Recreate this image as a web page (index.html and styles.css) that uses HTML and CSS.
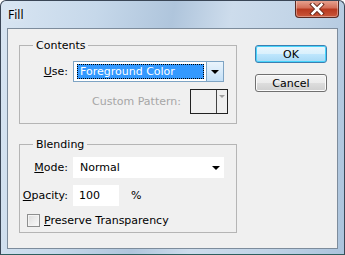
FILE: index.html
```html
<!DOCTYPE html>
<html lang="en">
<head>
	<meta charset="UTF-8">
	<title>Fill</title>
	<link rel="stylesheet" href="styles.css">
</head>
<body>
	<div class="window">
		<div class="titlebar">
			<span class="title">Fill</span>
			<a class="close-btn" href="javascript:;">
				<svg width="16" height="12" viewBox="0 0 16 12"><path d="M3.5 1.5 L12.5 10.5 M12.5 1.5 L3.5 10.5" stroke="#6b2b1e" stroke-width="4.5" stroke-linecap="square"/><path d="M3.5 1.5 L12.5 10.5 M12.5 1.5 L3.5 10.5" stroke="#fff" stroke-width="2.5" stroke-linecap="square"/></svg>
			</a>
		</div>
		<div class="client">
			<div class="groups">
				<fieldset class="group contents">
					<legend>Contents</legend>
					<div class="row">
						<label class="lbl"><u>U</u>se:</label>
						<div class="select focused">
							<span class="select-value">Foreground Color</span>
							<span class="select-btn"><i class="arrow"></i></span>
						</div>
					</div>
					<div class="row pattern-row">
						<span class="lbl-disabled">Custom Pattern:</span>
						<div class="pattern">
							<span class="pattern-swatch"></span>
							<span class="pattern-btn"><i class="arrow small"></i></span>
						</div>
					</div>
				</fieldset>
				<fieldset class="group blending">
					<legend>Blending</legend>
					<div class="row">
						<label class="lbl"><u>M</u>ode:</label>
						<div class="select plain">
							<span class="select-value">Normal</span>
							<span class="select-btn"><i class="arrow"></i></span>
						</div>
					</div>
					<div class="row">
						<label class="lbl"><u>O</u>pacity:</label>
						<span class="input">100</span>
						<span class="unit">%</span>
					</div>
					<div class="row check-row">
						<span class="checkbox"></span>
						<label><u>P</u>reserve Transparency</label>
					</div>
				</fieldset>
			</div>
			<div class="buttons">
				<button class="btn default">OK</button>
				<button class="btn">Cancel</button>
			</div>
		</div>
	</div>
</body>
</html>
```

FILE: styles.css
```css
body {
	margin: 0;
	padding: 0;
	font-family: "DejaVu Sans", Verdana, sans-serif;
	font-size: 11px;
	color: #000;
}
.window {
	width: 343px;
	height: 253px;
	border: 1px solid #3a4656;
	border-bottom-color: #2f5f5f;
	border-radius: 6px 6px 0 0;
	background: linear-gradient(100deg, #d8e5f2 0%, #c6d8ea 25%, #afc5dc 45%, #cddcec 60%, #c0d3e6 80%, #abc3dc 100%);
	display: flex;
	flex-direction: column;
	overflow: hidden;
}
.titlebar {
	height: 27px;
	display: flex;
	align-items: flex-start;
	justify-content: space-between;
}
.title {
	font-family: "Noto Sans", "DejaVu Sans", sans-serif;
	font-size: 12px;
	margin: 5px 0 0 7px;
	text-shadow: 0 0 6px #fff;
}
.close-btn {
	width: 42px;
	height: 17px;
	margin: -1px 5px 0 0;
	border: 1px solid #5a2a22;
	border-top: 0;
	border-radius: 0 0 4px 4px;
	background: linear-gradient(#e9a896 0%, #d4705a 45%, #b8391f 55%, #c9573a 100%);
	display: flex;
	align-items: center;
	justify-content: center;
	box-shadow: inset 0 0 0 1px rgba(255,255,255,.35);
}
.client {
	margin: 0 6px;
	height: 221px;
	border: 1px solid #7d8c9c;
	background: #f0f0f0;
	display: flex;
	padding: 10px 0 0 11px;
	box-sizing: border-box;
}
.groups {
	width: 218px;
	display: flex;
	flex-direction: column;
	gap: 14px;
}
.group {
	margin: 0;
	border: 1px solid #b5b5b5;
	padding: 0 8px 0 0;
}
.group legend {
	margin-left: 13px;
	padding: 0 3px;
	line-height: 13px;
}
.contents {
	padding-top: 9px;
	padding-bottom: 9px;
}
.blending {
	padding-top: 6px;
	padding-bottom: 5px;
}
.row {
	display: flex;
	align-items: center;
}
.row + .row {
	margin-top: 7px;
}
.check-row.row {
	margin-top: 8px;
}
.lbl {
	width: 53px;
	text-align: right;
	padding-right: 5px;
	box-sizing: border-box;
}
.select {
	width: 151px;
	height: 21px;
	box-sizing: border-box;
	display: flex;
	background: #fff;
}
.select.focused {
	border: 1px solid #7ea4c4;
	padding: 2px 1px 2px 3px;
}
.select.focused .select-value {
	background: #3399ff;
	color: #fff;
	outline: 1px dotted #000;
	outline-offset: -1px;
	padding-left: 3px;
}
.select-value {
	flex: 1;
	display: flex;
	align-items: center;
}
.select.focused .select-btn {
	width: 16px;
	margin: -2px -1px -2px 2px;
	border-left: 1px solid #7ea4c4;
	background: linear-gradient(#eaf4fc, #c4e0f7);
}
.select-btn {
	display: flex;
	align-items: center;
	justify-content: center;
	width: 18px;
}
.select.plain .select-value {
	padding-left: 7px;
}
.select.plain .select-btn {
	width: 12px;
	padding-right: 2px;
}
.arrow {
	width: 0;
	height: 0;
	border-left: 4px solid transparent;
	border-right: 4px solid transparent;
	border-top: 4px solid #000;
}
.arrow.small {
	border-left-width: 3px;
	border-right-width: 3px;
	border-top: 3px solid #a0a0a0;
}
.pattern-row {
	justify-content: flex-end;
}
.lbl-disabled {
	color: #a6a6a6;
	margin-right: 9px;
}
.pattern {
	width: 38px;
	height: 25px;
	box-sizing: border-box;
	border: 1px solid #222;
	display: flex;
}
.pattern-swatch {
	flex: 1;
	border-right: 1px solid #444;
}
.pattern-btn {
	width: 10px;
	display: flex;
	justify-content: center;
	padding-top: 5px;
}
.input {
	width: 46px;
	height: 21px;
	background: #fff;
	padding-left: 6px;
	box-sizing: border-box;
	display: flex;
	align-items: center;
}
.unit {
	margin-left: 12px;
}
.check-row {
	padding-left: 7px;
}
.checkbox {
	width: 11px;
	height: 11px;
	border: 1px solid #8e8f8f;
	background: linear-gradient(135deg, #dcdcdc, #fbfbfb);
	box-shadow: inset 0 0 0 1px #f4f4f4;
	margin-right: 4px;
}
.buttons {
	display: flex;
	flex-direction: column;
	gap: 11px;
	margin: 6px 0 0 18px;
}
.btn {
	width: 72px;
	height: 18px;
	font-family: inherit;
	font-size: 11px;
	padding: 0;
	border: 1px solid #707070;
	border-radius: 3px;
	background: linear-gradient(#f3f3f3 0%, #ebebeb 50%, #dddddd 51%, #cfcfcf 100%);
	box-shadow: inset 0 0 0 1px #fbfbfb;
}
.btn.default {
	border-color: #3c7fb1;
	background: linear-gradient(#eaf6fd 0%, #d9f0fc 50%, #bee6fd 51%, #a7d9f5 100%);
	box-shadow: inset 0 0 0 1px #48d4fb;
}
```
